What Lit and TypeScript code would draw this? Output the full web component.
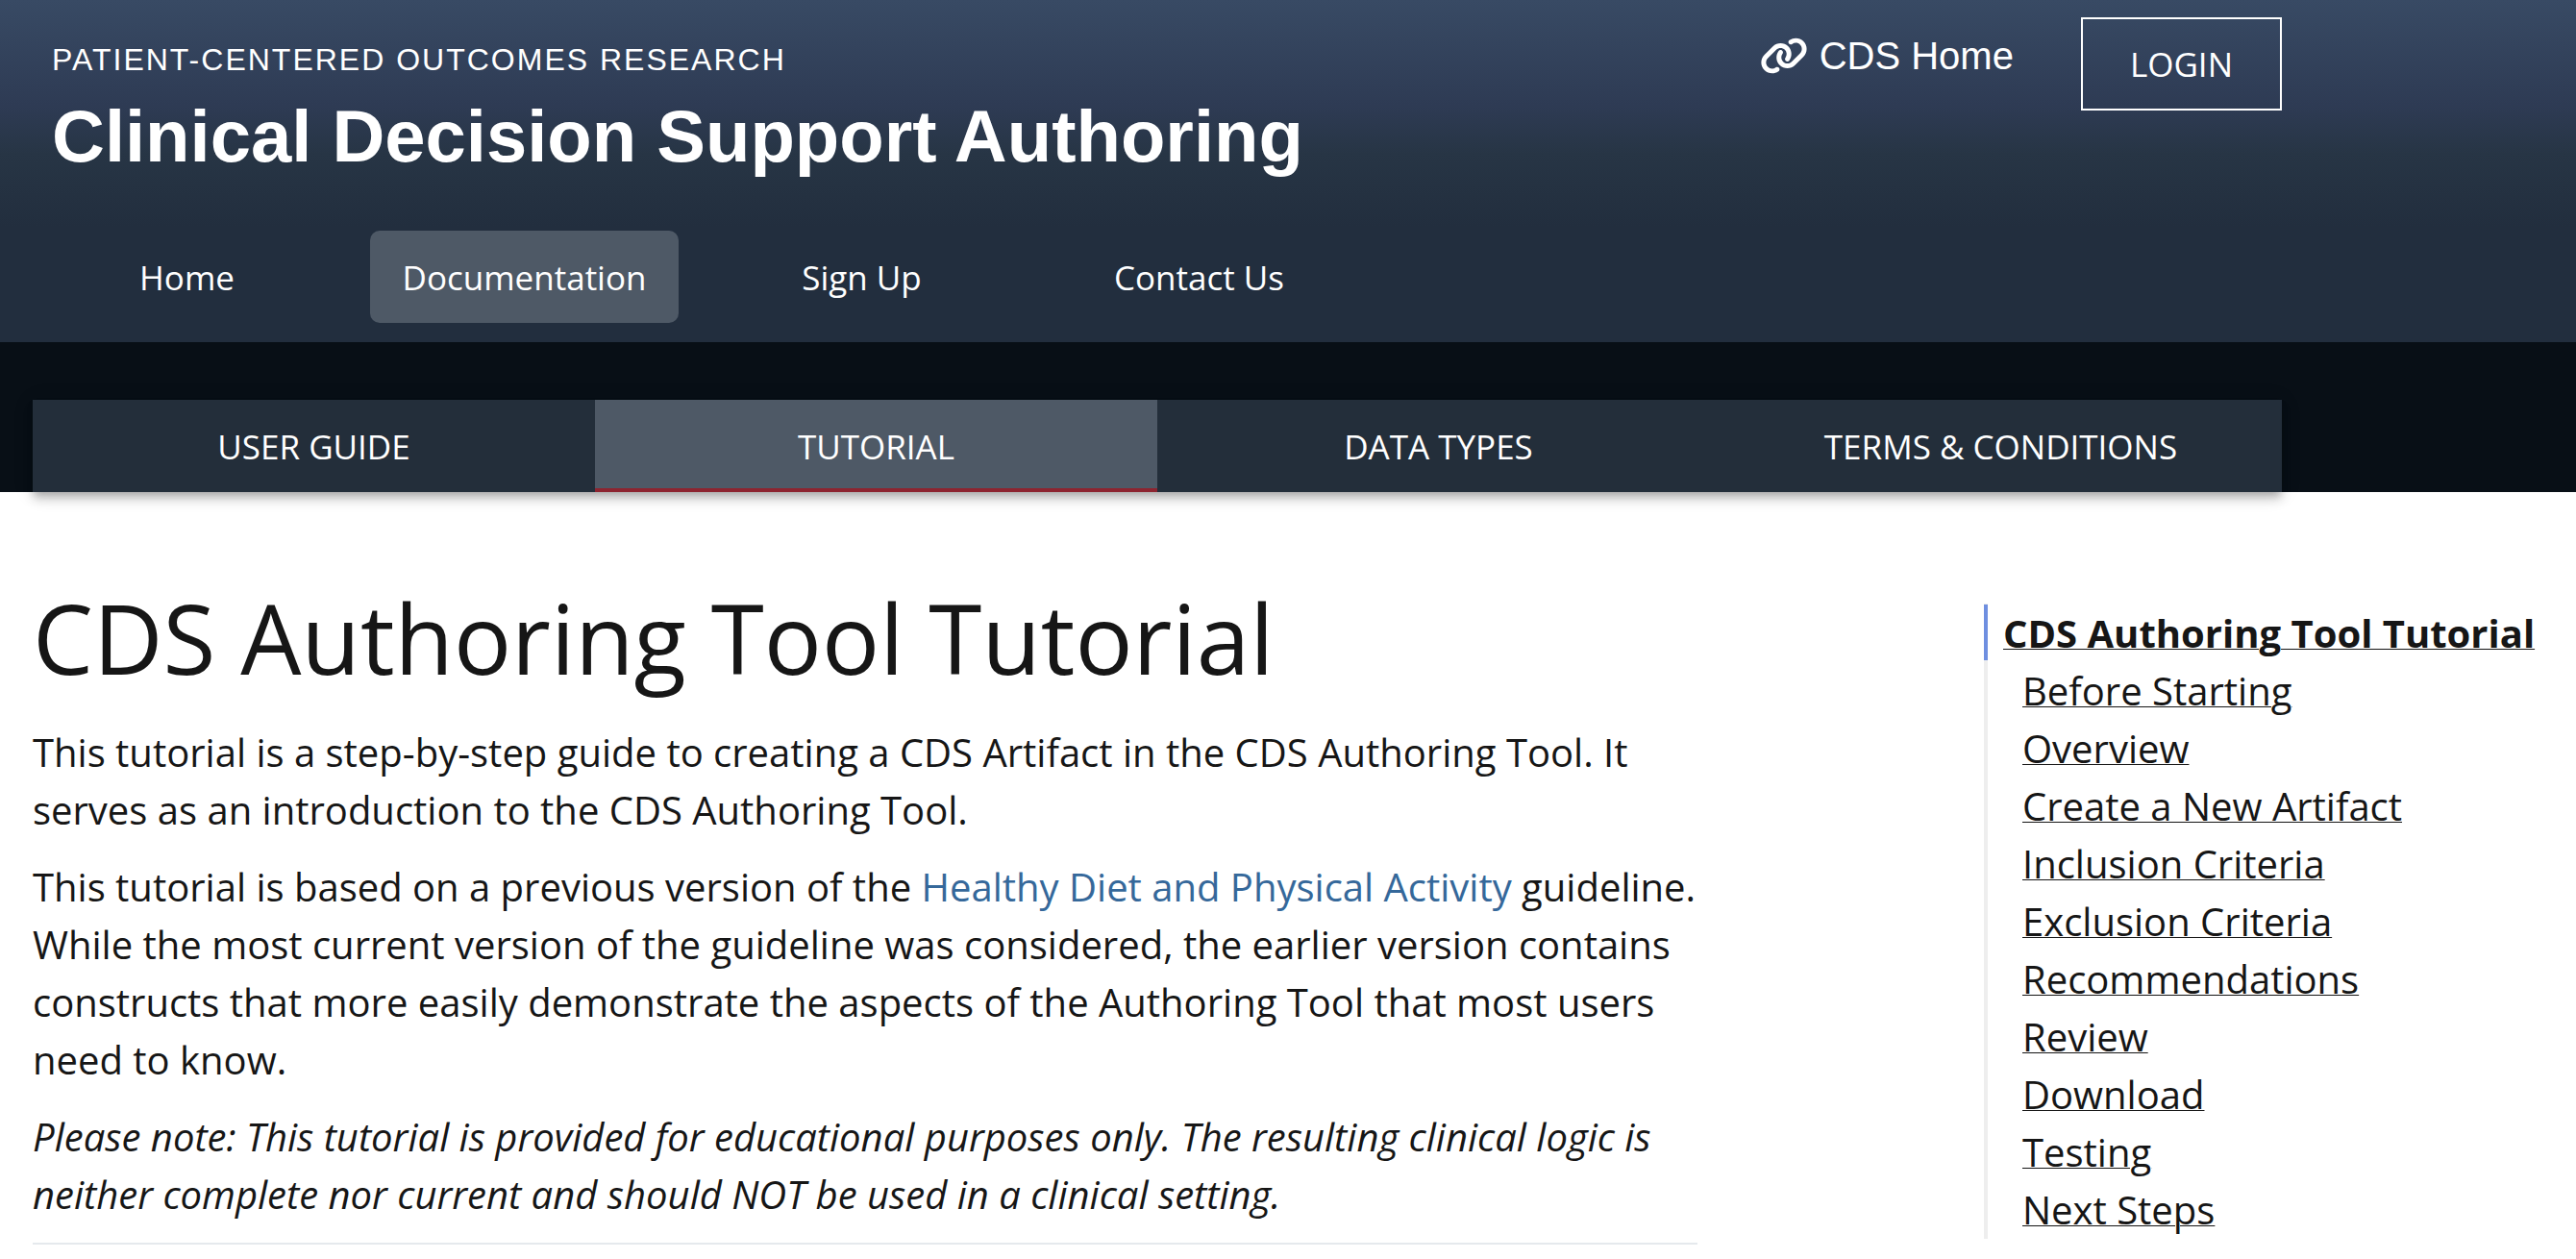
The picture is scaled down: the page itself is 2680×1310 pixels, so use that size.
import { LitElement, html, css, svg } from "lit";
import { customElement } from "lit/decorators.js";
import { classMap } from "lit/directives/class-map.js";

const linkIcon = svg`<path d="M579.8 267.7c56.5-56.5 56.5-148 0-204.5c-50-50-128.8-56.5-186.3-15.4l-1.6 1.1c-14.4 10.3-17.7 30.3-7.4 44.6s30.3 17.7 44.6 7.4l1.6-1.1c32.1-22.9 76-19.3 103.8 8.6c31.5 31.5 31.5 82.5 0 114L422.3 334.8c-31.5 31.5-82.5 31.5-114 0c-27.9-27.9-31.5-71.8-8.6-103.8l1.1-1.6c10.3-14.4 6.9-34.4-7.4-44.6s-34.4-6.9-44.6 7.4l-1.1 1.6C206.5 251.2 213 330 263 380c56.5 56.5 148 56.5 204.5 0L579.8 267.7zM60.2 244.3c-56.5 56.5-56.5 148 0 204.5c50 50 128.8 56.5 186.3 15.4l1.6-1.1c14.4-10.3 17.7-30.3 7.4-44.6s-30.3-17.7-44.6-7.4l-1.6 1.1c-32.1 22.9-76 19.3-103.8-8.6C74 372 74 321 105.5 289.5L217.7 177.2c31.5-31.5 82.5-31.5 114 0c27.9 27.9 31.5 71.8 8.6 103.9l-1.1 1.6c-10.3 14.4-6.9 34.4 7.4 44.6s34.4 6.9 44.6-7.4l1.1-1.6C433.5 260.8 427 182 377 132c-56.5-56.5-148-56.5-204.5 0L60.2 244.3z" fill="currentColor"/>`;

@customElement("site-header")
class SiteHeader extends LitElement {
  static styles = css`
    :host {
      display: block;
      color: #fff;
      background: linear-gradient(
        180deg,
        #384a64 0,
        #2e3b54 110px,
        #273545 160px,
        #222e3e 236px
      );
    }
    .inner {
      max-width: 2340px;
      padding: 18px 34px 20px;
    }
    .top {
      display: flex;
      justify-content: space-between;
      align-items: flex-start;
      height: 222px;
      box-sizing: border-box;
    }
    .brand {
      display: block;
      padding: 24px 0 0 20px;
      color: inherit;
      text-decoration: none;
      font-family: "Liberation Sans", sans-serif;
    }
    .over {
      display: block;
      font-size: 32px;
      line-height: 40px;
      letter-spacing: 2px;
      text-transform: uppercase;
    }
    .name {
      display: block;
      margin-top: 16px;
      font-size: 76px;
      line-height: 88px;
      font-weight: 700;
    }
    .tools {
      display: flex;
      align-items: flex-start;
      gap: 70px;
    }
    .home {
      display: flex;
      align-items: center;
      gap: 12px;
      padding-top: 17px;
      color: inherit;
      text-decoration: none;
      font: 40px/46px "Liberation Sans", sans-serif;
    }
    .icon {
      width: 50px;
      height: 40px;
    }
    .login {
      height: 97px;
      padding: 0 49px;
      border: 2px solid #fff;
      background: transparent;
      color: inherit;
      font: 35px/94px "Open Sans", sans-serif;
    }
    .nav {
      display: grid;
      grid-template-columns: repeat(4, 15%);
      margin: 0 15px 0 -15px;
    }
    .cell {
      display: flex;
      justify-content: center;
    }
    .item {
      height: 96px;
      padding: 0 34px;
      border-radius: 10px;
      color: inherit;
      text-decoration: none;
      white-space: nowrap;
      font: 35px/98px "Open Sans", sans-serif;
    }
    .item.on {
      background: #4e5966;
    }
  `;

  private items = ["Home", "Documentation", "Sign Up", "Contact Us"];

  render() {
    return html`
      <header class="inner">
        <div class="top">
          <a class="brand" href="#">
            <span class="over">Patient-Centered Outcomes Research</span>
            <span class="name">Clinical Decision Support Authoring</span>
          </a>
          <div class="tools">
            <a class="home" href="#">
              <svg class="icon" viewBox="0 0 640 512" aria-hidden="true">${linkIcon}</svg>
              <span>CDS Home</span>
            </a>
            <button class="login" type="button">LOGIN</button>
          </div>
        </div>
        <nav class="nav">
          ${this.items.map(
            (label) => html`<div class="cell">
              <a class=${classMap({ item: true, on: label === "Documentation" })} href="#">${label}</a>
            </div>`
          )}
        </nav>
      </header>
    `;
  }
}

@customElement("doc-tabs")
class DocTabs extends LitElement {
  static styles = css`
    :host {
      display: block;
      padding: 60px 34px 0;
      background: #080f16;
    }
    .tabs {
      display: grid;
      grid-template-columns: repeat(4, 1fr);
      max-width: 2340px;
      background: #232e3a;
      box-shadow:
        0 4px 8px -2px rgba(0, 0, 0, 0.2),
        0 8px 10px rgba(0, 0, 0, 0.14),
        0 2px 20px rgba(0, 0, 0, 0.12);
    }
    .tab {
      height: 96px;
      box-sizing: border-box;
      border-bottom: 4px solid transparent;
      color: #fff;
      text-align: center;
      text-decoration: none;
      text-transform: uppercase;
      font: 35px/98px "Open Sans", sans-serif;
    }
    .tab.on {
      background: #4e5966;
      border-bottom-color: #8d2430;
    }
  `;

  private tabs = ["User Guide", "Tutorial", "Data Types", "Terms & Conditions"];

  render() {
    return html`<nav class="tabs">
      ${this.tabs.map(
        (label) => html`<a class=${classMap({ tab: true, on: label === "Tutorial" })} href="#">${label}</a>`
      )}
    </nav>`;
  }
}

@customElement("page-toc")
class PageToc extends LitElement {
  static styles = css`
    :host {
      display: block;
      font: 40px/60px "Open Sans", sans-serif;
    }
    .list {
      margin: 0;
      padding: 1px 0 0;
      list-style: none;
      border-left: 4px solid #eee;
    }
    .row {
      padding-left: 36px;
      white-space: nowrap;
    }
    .row.on {
      margin-left: -4px;
      padding-left: 20px;
      font-weight: 700;
      background: linear-gradient(#6f8fe0, #6f8fe0) 0 0 / 4px 58px no-repeat;
    }
    .link {
      color: #161616;
      text-decoration: underline;
      text-decoration-thickness: 1px;
    }
  `;

  private entries = [
    "CDS Authoring Tool Tutorial",
    "Before Starting",
    "Overview",
    "Create a New Artifact",
    "Inclusion Criteria",
    "Exclusion Criteria",
    "Recommendations",
    "Review",
    "Download",
    "Testing",
    "Next Steps",
  ];

  render() {
    return html`<ul class="list">
      ${this.entries.map(
        (label, i) => html`<li class=${classMap({ row: true, on: i === 0 })}><a class="link" href="#">${label}</a></li>`
      )}
    </ul>`;
  }
}

@customElement("app-root")
class AppRoot extends LitElement {
  static styles = css`
    :host {
      display: block;
      min-height: 100vh;
      background: #fff;
      color: #161616;
      font: 40px/60px "Open Sans", sans-serif;
    }
    .main {
      display: grid;
      grid-template-columns: minmax(0, 1fr) 582px;
      column-gap: 298px;
      padding: 96px 34px 16px;
    }
    .title {
      margin: 0 0 35px;
      font-size: 100px;
      line-height: 110px;
      font-weight: 400;
    }
    .para {
      margin: 0 0 20px;
    }
    .ref {
      color: #35689a;
      text-decoration: none;
    }
    .rule {
      margin: 0;
      border: 0;
      border-top: 2px solid #e5e9ed;
    }
    .toc {
      padding-top: 20px;
    }
  `;

  render() {
    return html`
      <site-header></site-header>
      <doc-tabs></doc-tabs>
      <main class="main">
        <article>
          <h1 class="title">CDS Authoring Tool Tutorial</h1>
          <p class="para">
            This tutorial is a step-by-step guide to creating a CDS Artifact in the CDS Authoring Tool. It serves as an
            introduction to the CDS Authoring Tool.
          </p>
          <p class="para">
            This tutorial is based on a previous version of the
            <a class="ref" href="#">Healthy Diet and Physical Activity</a> guideline. While the most current version of
            the guideline was considered, the earlier version contains constructs that more easily demonstrate the
            aspects of the Authoring Tool that most users need to know.
          </p>
          <p class="para">
            <em>Please note: This tutorial is provided for educational purposes only. The resulting clinical logic is
            neither complete nor current and should NOT be used in a clinical setting.</em>
          </p>
          <hr class="rule" />
        </article>
        <page-toc class="toc"></page-toc>
      </main>
    `;
  }
}
